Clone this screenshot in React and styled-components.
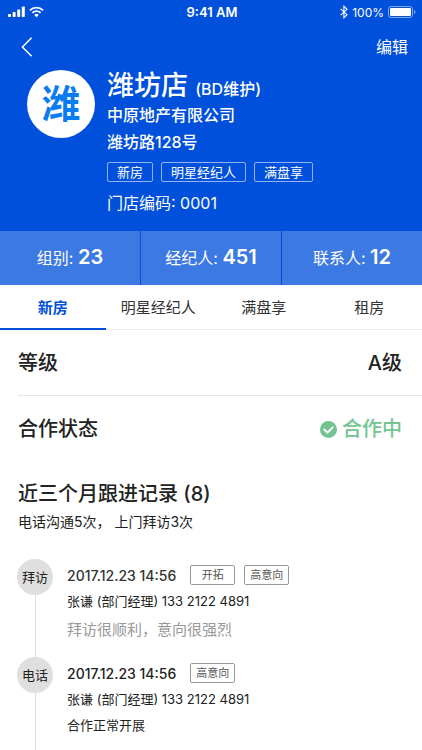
import React from "react";
import styled, { createGlobalStyle } from "styled-components";

const TAGS = ["新房", "明星经纪人", "满盘享"];

const STATS = [
  { label: "组别", value: 23 },
  { label: "经纪人", value: 451 },
  { label: "联系人", value: 12 },
];

const TABS = ["新房", "明星经纪人", "满盘享", "租房"];

const RECORDS = [
  {
    type: "拜访",
    date: "2017.12.23 14:56",
    tags: ["开拓", "高意向"],
    contact: "张谦 (部门经理) 133 2122 4891",
    note: "拜访很顺利，意向很强烈",
    muted: true,
  },
  {
    type: "电话",
    date: "2017.12.23 14:56",
    tags: ["高意向"],
    contact: "张谦 (部门经理) 133 2122 4891",
    note: "合作正常开展",
  },
];

const SignalIcon = () => (
  <svg width="17" height="12" viewBox="0 0 17 12" fill="#fff">
    <rect x="0" y="8" width="3" height="3" rx="0.8" />
    <rect x="4.6" y="6" width="3" height="5" rx="0.8" />
    <rect x="9.2" y="3.5" width="3" height="7.5" rx="0.8" />
    <rect x="13.8" y="0.5" width="3" height="10.5" rx="0.8" />
  </svg>
);

const WifiIcon = () => (
  <svg width="15" height="12" viewBox="0 0 15 12" fill="none" stroke="#fff">
    <path d="M0.9 4.3a9.4 9.4 0 0 1 13.2 0" strokeWidth="1.8" />
    <path d="M3.4 6.9a5.8 5.8 0 0 1 8.2 0" strokeWidth="1.8" />
    <path
      d="M7.5 11.2L5.3 8.9a3.1 3.1 0 0 1 4.4 0z"
      fill="#fff"
      stroke="none"
    />
  </svg>
);

const BluetoothIcon = () => (
  <svg width="8" height="14" viewBox="0 0 8 14" fill="none" stroke="#fff">
    <path d="M0.6 3.8L7 9.7 3.9 12.8V1.2L7 4.3 0.6 10.2" strokeWidth="1.1" />
  </svg>
);

const BatteryIcon = () => (
  <svg width="28" height="12" viewBox="0 0 28 12">
    <rect
      x="0.5"
      y="0.5"
      width="24"
      height="11"
      rx="2.6"
      fill="none"
      stroke="#fff"
      strokeOpacity="0.5"
    />
    <rect x="2" y="2" width="21" height="8" rx="1.2" fill="#fff" />
    <path
      d="M26 4v4c0.9-0.3 1.4-1.1 1.4-2S26.9 4.3 26 4z"
      fill="#fff"
      fillOpacity="0.5"
    />
  </svg>
);

const BackIcon = () => (
  <svg width="12" height="20" viewBox="0 0 12 20" fill="none">
    <path d="M10.6 0.8L1.4 10l9.2 9.2" stroke="#fff" strokeWidth="1.5" />
  </svg>
);

const CheckIcon = () => (
  <svg width="17" height="17" viewBox="0 0 17 17" fill="none">
    <circle cx="8.5" cy="8.5" r="8.5" fill="#72c490" />
    <path
      d="M4.2 8.5l3.2 3.1 5.4-5.3"
      stroke="#fff"
      strokeWidth="1.9"
      strokeLinecap="round"
    />
  </svg>
);

const App = () => {
  return (
    <Page>
      <GlobalStyle />
      <Header>
        <StatusBar>
          <StatusGroup>
            <SignalIcon />
            <WifiIcon />
          </StatusGroup>
          <Clock>9:41 AM</Clock>
          <StatusGroup $end>
            <BluetoothIcon />
            <span>100%</span>
            <BatteryIcon />
          </StatusGroup>
        </StatusBar>
        <NavBar>
          <NavButton aria-label="返回">
            <BackIcon />
          </NavButton>
          <NavButton>编辑</NavButton>
        </NavBar>
        <Profile>
          <Avatar>潍</Avatar>
          <div>
            <Name>
              潍坊店 <Maintainer>(BD维护)</Maintainer>
            </Name>
            <InfoLine>中原地产有限公司</InfoLine>
            <InfoLine>潍坊路128号</InfoLine>
            <TagList>
              {TAGS.map((tag) => (
                <StoreTag key={tag}>{tag}</StoreTag>
              ))}
            </TagList>
            <StoreCode>门店编码: 0001</StoreCode>
          </div>
        </Profile>
        <Stats>
          {STATS.map((stat) => (
            <Stat key={stat.label}>
              {stat.label}: <StatValue>{stat.value}</StatValue>
            </Stat>
          ))}
        </Stats>
      </Header>

      <Tabs>
        {TABS.map((tab, index) => (
          <Tab key={tab} $active={index === 0}>
            {tab}
          </Tab>
        ))}
      </Tabs>

      <Row $divided>
        <Title>等级</Title>
        <RowValue>A级</RowValue>
      </Row>
      <Row>
        <Title>合作状态</Title>
        <RowValue $success>
          <CheckIcon />
          合作中
        </RowValue>
      </Row>

      <Follow>
        <Title>近三个月跟进记录 (8)</Title>
        <Summary>电话沟通5次， 上门拜访3次</Summary>
      </Follow>
      <Timeline>
        {RECORDS.map((record) => (
          <Record key={record.type}>
            <Rail>
              <Dot>{record.type}</Dot>
            </Rail>
            <div>
              <RecordHead $muted={record.muted}>
                {record.date}
                <RecordTags>
                  {record.tags.map((tag) => (
                    <RecordTag key={tag}>{tag}</RecordTag>
                  ))}
                </RecordTags>
              </RecordHead>
              <Contact>{record.contact}</Contact>
              <Note $muted={record.muted}>{record.note}</Note>
            </div>
          </Record>
        ))}
      </Timeline>
    </Page>
  );
};

const GlobalStyle = createGlobalStyle`
  * {
    box-sizing: border-box;
  }
  body {
    margin: 0;
    background: #fff;
    font-family: Inter, "Noto Sans CJK SC", sans-serif;
    color: #222;
  }
  button {
    padding: 0;
    border: none;
    background: none;
    font: inherit;
    color: inherit;
    cursor: pointer;
  }
  svg {
    display: block;
    flex-shrink: 0;
  }
`;

const Page = styled.div`
  height: 100vh;
  overflow: hidden;
`;
const Header = styled.header`
  background-color: #0050dc;
  color: #fff;
`;
const StatusBar = styled.div`
  display: grid;
  grid-template-columns: 1fr auto 1fr;
  align-items: center;
  height: 24px;
  padding: 0 6px 0 8px;
  font-size: 12px;
`;
const StatusGroup = styled.div`
  display: flex;
  align-items: center;
  justify-content: ${(props) => (props.$end ? "flex-end" : "flex-start")};
  gap: 4px;
`;
const Clock = styled.span`
  font-size: 13px;
  font-weight: 600;
`;
const NavBar = styled.nav`
  display: flex;
  align-items: center;
  justify-content: space-between;
  height: 46px;
  padding: 0 14px 0 21px;
  font-size: 16px;
`;
const NavButton = styled.button`
  line-height: 24px;
`;
const Profile = styled.section`
  display: flex;
  align-items: flex-start;
  gap: 12px;
  padding: 0 27px 17px;
`;
const Avatar = styled.div`
  flex-shrink: 0;
  width: 68px;
  height: 68px;
  border-radius: 50%;
  background-color: #fff;
  color: #0a7cf0;
  font-size: 39px;
  font-weight: 600;
  line-height: 68px;
  text-align: center;
`;
const Name = styled.h1`
  margin: 0;
  font-size: 27px;
  font-weight: 500;
  line-height: 32px;
`;
const Maintainer = styled.span`
  font-size: 16px;
  line-height: 1;
`;
const InfoLine = styled.p`
  margin: 0;
  font-size: 16px;
  font-weight: 500;
  line-height: 27px;
`;
const TagList = styled.div`
  display: flex;
  gap: 8px;
  margin-top: 6px;
`;
const StoreTag = styled.span`
  padding: 0 9px;
  border: 1px solid #8fb4f2;
  border-radius: 2px;
  font-size: 13px;
  line-height: 18px;
`;
const StoreCode = styled.p`
  margin: 10px 0 0;
  font-size: 16px;
  line-height: 22px;
`;
const Stats = styled.section`
  display: grid;
  grid-template-columns: repeat(3, 1fr);
  gap: 1px;
`;
const Stat = styled.div`
  background-color: #3d79e3;
  font-size: 16px;
  line-height: 54px;
  text-align: center;
`;
const StatValue = styled.strong`
  font-size: 20px;
  font-weight: 600;
  line-height: 1;
`;
const Tabs = styled.nav`
  display: grid;
  grid-template-columns: repeat(4, 1fr);
  border-bottom: 1px solid #ececec;
`;
const Tab = styled.button`
  height: 45px;
  margin-bottom: -1px;
  border-bottom: 2px solid
    ${(props) => (props.$active ? "#0050dc" : "transparent")};
  color: ${(props) => (props.$active ? "#0050dc" : "#333")};
  font-size: 15px;
  font-weight: ${(props) => (props.$active ? 600 : 400)};
`;
const Row = styled.section`
  display: flex;
  align-items: center;
  justify-content: space-between;
  height: 66px;
  margin-left: 18px;
  padding-right: 20px;
  border-bottom: ${(props) => (props.$divided ? "1px solid #e6e6e6" : "none")};
`;
const Title = styled.h2`
  margin: 0;
  font-size: 20px;
  font-weight: 500;
  line-height: 30px;
`;
const RowValue = styled.span`
  display: flex;
  align-items: center;
  gap: 5px;
  color: ${(props) => (props.$success ? "#72c490" : "#222")};
  font-size: 20px;
  font-weight: 500;
  line-height: 30px;
`;
const Follow = styled.section`
  padding: 17px 18px 0;
`;
const Summary = styled.p`
  margin: 3px 0 0;
  font-size: 14px;
  line-height: 20px;
`;
const Timeline = styled.ul`
  margin: 27px 0 0;
  padding: 0 17px;
  list-style: none;
`;
const Record = styled.li`
  display: flex;
  gap: 14px;
  min-height: 98px;
`;
const Rail = styled.div`
  width: 36px;
  background: linear-gradient(#ddd, #ddd) center / 1px 100% no-repeat;
`;
const Dot = styled.div`
  height: 36px;
  border-radius: 50%;
  background-color: #dfdfdf;
  font-size: 13px;
  line-height: 36px;
  text-align: center;
`;
const RecordHead = styled.div`
  display: flex;
  align-items: center;
  gap: 14px;
  height: 32px;
  color: ${(props) => (props.$muted ? "#333" : "#222")};
  font-size: 14px;
  font-weight: 500;
`;
const RecordTags = styled.div`
  display: flex;
  gap: 9px;
`;
const RecordTag = styled.span`
  min-width: 45px;
  border: 1px solid #999;
  border-radius: 2px;
  color: #555;
  font-size: 11px;
  font-weight: 400;
  line-height: 18px;
  text-align: center;
`;
const Contact = styled.p`
  margin: 0;
  font-size: 13px;
  line-height: 20px;
`;
const Note = styled.p`
  margin: 4px 0 0;
  color: ${(props) => (props.$muted ? "#999" : "#222")};
  font-size: ${(props) => (props.$muted ? "15px" : "13px")};
  line-height: ${(props) => (props.$muted ? "30px" : "24px")};
`;

export default App;
